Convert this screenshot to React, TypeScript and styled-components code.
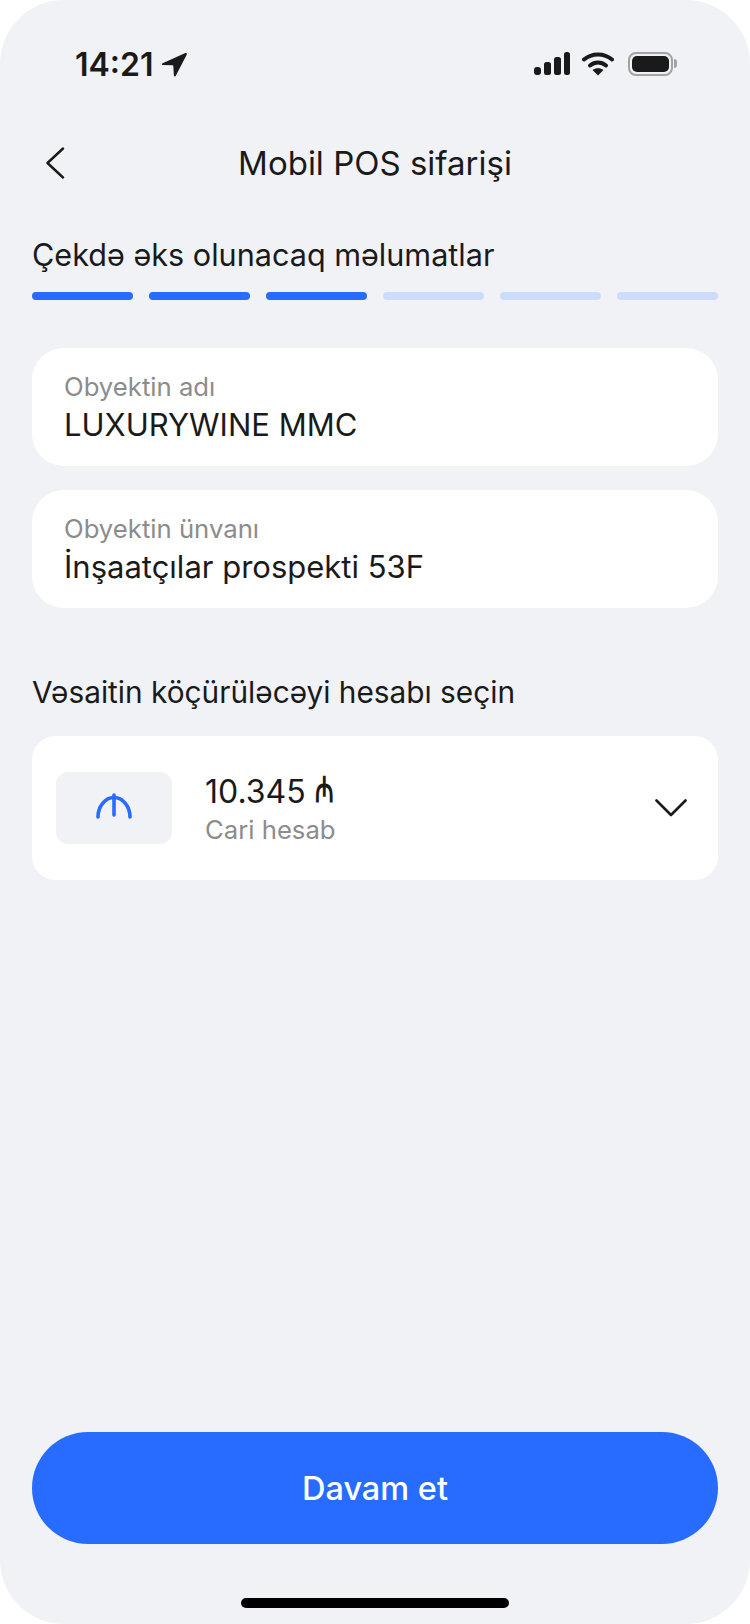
import React from 'react';
import styled, { createGlobalStyle } from 'styled-components';

const COLORS = {
  PAGE: '#f0f2f6',
  PRIMARY: '#276bff',
  PRIMARY_SOFT: '#cddbfd',
  TEXT: '#1a1a1a',
  MUTED: '#8c8c8c',
};

const STEPS = [true, true, true, false, false, false];

const App = () => {
  return (
    <>
      <GlobalStyle />
      <Phone>
        <StatusBar>
          <TimeGroup>
            <Time>14:21</Time>
            <svg width="26" height="25" viewBox="0 0 26 25">
              <path
                d="M24.4 1.1 1.6 11.2c-1 .5-.7 1.9.4 1.9l9.6.2c.4 0 .7.3.7.7l.6 9.5c.1 1.100 1.500 1.300 1.900.3L25.800 2.500c.4-.9-.5-1.800-1.400-1.400Z"
                fill={COLORS.TEXT}
              />
            </svg>
          </TimeGroup>
          <StatusIcons>
            <svg width="36" height="24" viewBox="0 0 36 24" fill={COLORS.TEXT}>
              <rect x="0" y="15" width="7" height="8" rx="3" />
              <rect x="10" y="10" width="7" height="13" rx="2.500" />
              <rect x="20" y="5" width="7" height="18" rx="2.500" />
              <rect x="30" y="0" width="6" height="23" rx="2.500" />
            </svg>
            <svg width="32" height="24" viewBox="0 0 32 24" fill="none">
              <path d="M2 7.500C9.800.7 22.200.7 30 7.500" stroke={COLORS.TEXT} strokeWidth="4" strokeLinecap="round" />
              <path d="M8 13.500c4.800-4 11.200-4 16 0" stroke={COLORS.TEXT} strokeWidth="4" strokeLinecap="round" />
              <path d="M16 23.500 10.500 18c3.300-2.500 7.700-2.500 11 0L16 23.500Z" fill={COLORS.TEXT} />
            </svg>
            <Battery>
              <BatteryFill />
            </Battery>
          </StatusIcons>
        </StatusBar>

        <NavBar>
          <BackButton>
            <svg width="20" height="32" viewBox="0 0 20 32" fill="none">
              <path
                d="M18 1.500 2.500 16 18 30.500"
                stroke={COLORS.TEXT}
                strokeWidth="2.400"
                strokeLinecap="round"
                strokeLinejoin="round"
              />
            </svg>
          </BackButton>
          <Title>Mobil POS sifarişi</Title>
        </NavBar>

        <StepTitle>Çekdə əks olunacaq məlumatlar</StepTitle>
        <Progress>
          {STEPS.map((done, i) => (
            <ProgressBar key={i} $done={done} />
          ))}
        </Progress>

        <Fields>
          <Field>
            <FieldLabel>Obyektin adı</FieldLabel>
            <FieldValue>LUXURYWINE MMC</FieldValue>
          </Field>
          <Field>
            <FieldLabel>Obyektin ünvanı</FieldLabel>
            <FieldValue>İnşaatçılar prospekti 53F</FieldValue>
          </Field>
        </Fields>

        <SectionLabel>Vəsaitin köçürüləcəyi hesabı seçin</SectionLabel>
        <AccountCard>
          <CurrencyTile>
            <svg width="36" height="26" viewBox="0 0 36 26" fill="none">
              <path
                d="M2 24C2 13.500 9 4.500 18 4.500S34 13.500 34 24M18 2v20"
                stroke={COLORS.PRIMARY}
                strokeWidth="3.600"
                strokeLinecap="round"
              />
            </svg>
          </CurrencyTile>
          <AccountInfo>
            <Amount>
              10.345 <Manat>₼</Manat>
            </Amount>
            <AccountType>Cari hesab</AccountType>
          </AccountInfo>
          <svg width="32" height="18" viewBox="0 0 32 18" fill="none">
            <path
              d="M1.500 1.500 16 16 30.500 1.500"
              stroke={COLORS.TEXT}
              strokeWidth="2.600"
              strokeLinecap="round"
              strokeLinejoin="round"
            />
          </svg>
        </AccountCard>

        <ContinueButton>Davam et</ContinueButton>
        <HomeBar />
      </Phone>
    </>
  );
};

export default App;

const GlobalStyle = createGlobalStyle`
  html, body {
    margin: 0;
    background: #ffffff;
  }
  * {
    box-sizing: border-box;
  }
`;

const Phone = styled.div`
  display: flex;
  flex-direction: column;
  width: 750px;
  height: 1624px;
  padding: 0 32px;
  border-radius: 64px;
  overflow: hidden;
  background: ${COLORS.PAGE};
  color: ${COLORS.TEXT};
  font-family: Inter, 'Liberation Sans', sans-serif;
`;

const StatusBar = styled.div`
  display: flex;
  align-items: center;
  justify-content: space-between;
  height: 28px;
  margin-top: 50px;
  padding: 0 45px 0 43px;
`;

const TimeGroup = styled.div`
  display: flex;
  align-items: center;
  gap: 7px;
`;

const Time = styled.span`
  padding-top: 2px;
  font-size: 32px;
  font-weight: 600;
  line-height: 28px;
`;

const StatusIcons = styled.div`
  display: flex;
  align-items: center;
  gap: 12px;
`;

const Battery = styled.div`
  position: relative;
  width: 45px;
  height: 24px;
  margin-left: 2px;
  padding: 2px;
  border: 2px solid #a3a3a3;
  border-radius: 8px;

  &::after {
    content: '';
    position: absolute;
    top: 5px;
    right: -6px;
    width: 3px;
    height: 9px;
    border-radius: 0 3px 3px 0;
    background: #a3a3a3;
  }
`;

const BatteryFill = styled.div`
  height: 100%;
  border-radius: 5px;
  background: ${COLORS.TEXT};
`;

const NavBar = styled.div`
  position: relative;
  display: flex;
  align-items: center;
  justify-content: center;
  height: 44px;
  margin-top: 63px;
`;

const BackButton = styled.div`
  position: absolute;
  left: 13px;
  top: 6px;
  display: flex;
`;

const Title = styled.div`
  font-size: 33px;
  line-height: 48px;
  font-weight: 400;
`;

const StepTitle = styled.div`
  margin-top: 48px;
  font-size: 30.6px;
  line-height: 44px;
`;

const Progress = styled.div`
  display: grid;
  grid-template-columns: repeat(6, 1fr);
  gap: 16px;
  margin-top: 15px;
`;

const ProgressBar = styled.div<{ $done: boolean }>`
  height: 8px;
  border-radius: 4px;
  background: ${({ $done }) => ($done ? COLORS.PRIMARY : COLORS.PRIMARY_SOFT)};
`;

const Fields = styled.div`
  display: flex;
  flex-direction: column;
  gap: 24px;
  margin-top: 48px;
`;

const Field = styled.div`
  display: flex;
  flex-direction: column;
  justify-content: center;
  height: 118px;
  padding: 0 32px;
  border-radius: 32px;
  background: #ffffff;
`;

const FieldLabel = styled.div`
  font-size: 25.7px;
  line-height: 32px;
  padding-top: 1px;
  color: ${COLORS.MUTED};
`;

const FieldValue = styled.div`
  font-size: 31px;
  line-height: 40px;
  padding-top: 2px;
`;

const SectionLabel = styled.div`
  margin-top: 64px;
  font-size: 29.8px;
  line-height: 40px;
`;

const AccountCard = styled.div`
  display: flex;
  align-items: center;
  height: 144px;
  margin-top: 24px;
  padding: 0 31px 0 24px;
  border-radius: 24px;
  background: #ffffff;
`;

const CurrencyTile = styled.div`
  display: flex;
  align-items: center;
  justify-content: center;
  width: 116px;
  height: 72px;
  padding-bottom: 5px;
  border-radius: 12px;
  background: ${COLORS.PAGE};
`;

const AccountInfo = styled.div`
  flex: 1;
  margin-left: 33px;
`;

const Amount = styled.div`
  padding-top: 1px;
  font-size: 32px;
  line-height: 40px;
`;

const Manat = styled.span`
  display: inline-block;
  font-family: 'DejaVu Sans', sans-serif;
  font-weight: 700;
  transform: scale(0.72, 1.12);
  transform-origin: left bottom;
`;

const AccountType = styled.div`
  font-size: 25.7px;
  line-height: 32px;
  padding-top: 2px;
  color: ${COLORS.MUTED};
`;

const ContinueButton = styled.button`
  flex: none;
  height: 112px;
  margin-top: auto;
  border: 0;
  border-radius: 56px;
  background: ${COLORS.PRIMARY};
  color: #ffffff;
  font-family: inherit;
  font-size: 32.5px;
  font-weight: 500;
`;

const HomeBar = styled.div`
  flex: none;
  align-self: center;
  width: 268px;
  height: 10px;
  margin: 54px 0 16px;
  border-radius: 5px;
  background: #000000;
`;
